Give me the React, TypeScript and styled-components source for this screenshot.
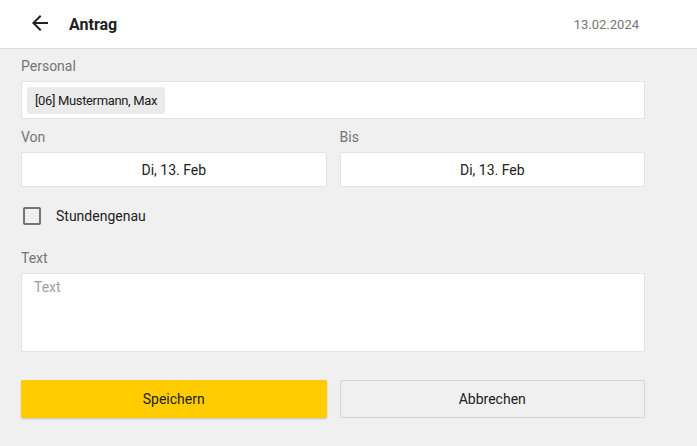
import React from "react";
import styled, { createGlobalStyle } from "styled-components";

const GlobalStyle = createGlobalStyle`
    html, body {
        margin: 0;
        padding: 0;
        background: #f0f0f0;
        font-family: Roboto, "Noto Sans", "Liberation Sans", sans-serif;
        color: #212121;
    }
    * {
        box-sizing: border-box;
    }
`;

const BackIcon: React.FC = () => (
    <svg width="24" height="24" viewBox="0 0 24 24" fill="#212121">
        <path d="M20 11H7.83l5.59-5.59L12 4l-8 8 8 8 1.41-1.41L7.83 13H20v-2z" />
    </svg>
);

const App: React.FC = () => {
    const [exact, setExact] = React.useState(false);

    return (
        <>
            <GlobalStyle />
            <Page>
                <Header>
                    <BackButton aria-label="Zurück">
                        <BackIcon />
                    </BackButton>
                    <Title>Antrag</Title>
                    <HeaderDate>13.02.2024</HeaderDate>
                </Header>

                <Form>
                    <Field>
                        <Label>Personal</Label>
                        <ChipInput>
                            <Chip>[06] Mustermann, Max</Chip>
                        </ChipInput>
                    </Field>

                    <TwoColumns $top={8}>
                        <Field>
                            <Label>Von</Label>
                            <DateBox>Di, 13. Feb</DateBox>
                        </Field>
                        <Field>
                            <Label>Bis</Label>
                            <DateBox>Di, 13. Feb</DateBox>
                        </Field>
                    </TwoColumns>

                    <CheckRow onClick={() => setExact(v => !v)}>
                        <CheckBox $checked={exact} />
                        <CheckLabel>Stundengenau</CheckLabel>
                    </CheckRow>

                    <Field $top={23}>
                        <Label>Text</Label>
                        <TextArea placeholder="Text" />
                    </Field>

                    <TwoColumns $top={28}>
                        <Button $primary>Speichern</Button>
                        <Button>Abbrechen</Button>
                    </TwoColumns>
                </Form>
            </Page>
        </>
    );
};

export default App;

const Page = styled.div`
    min-height: 446px;
    background: #f0f0f0;
`;

const Header = styled.header`
    display: flex;
    align-items: center;
    height: 49px;
    padding: 0 58px 0 28px;
    background: #ffffff;
    border-bottom: 1px solid #e0e0e0;
`;

const BackButton = styled.button`
    display: flex;
    align-items: center;
    justify-content: center;
    width: 24px;
    height: 24px;
    padding: 0;
    margin-top: -2px;
    border: none;
    background: transparent;
    cursor: pointer;
`;

const Title = styled.h1`
    margin: 0 0 0 17px;
    font-size: 16px;
    font-weight: 700;
    color: #212121;
`;

const HeaderDate = styled.span`
    margin-left: auto;
    font-size: 13px;
    color: #757575;
`;

const Form = styled.main`
    display: flex;
    flex-direction: column;
    padding: 7px 52px 0 21px;
`;

const Field = styled.div<{ $top?: number }>`
    display: flex;
    flex-direction: column;
    margin-top: ${({ $top }) => $top ?? 0}px;
`;

const Label = styled.label`
    font-size: 14px;
    line-height: 20px;
    color: #757575;
    margin-bottom: 5px;
`;

const ChipInput = styled.div`
    display: flex;
    align-items: center;
    height: 38px;
    padding: 0 5px;
    background: #ffffff;
    border: 1px solid #e3e3e3;
    border-radius: 2px;
`;

const Chip = styled.span`
    display: inline-flex;
    align-items: center;
    height: 27px;
    padding: 0 8px;
    font-size: 13px;
    letter-spacing: -0.35px;
    color: #212121;
    background: #ebebeb;
    border-radius: 3px;
`;

const TwoColumns = styled.div<{ $top: number }>`
    display: grid;
    grid-template-columns: 1fr 1fr;
    gap: 13px;
    margin-top: ${({ $top }) => $top}px;
`;

const DateBox = styled.div`
    display: flex;
    align-items: center;
    justify-content: center;
    height: 35px;
    font-size: 14px;
    color: #212121;
    background: #ffffff;
    border: 1px solid #e3e3e3;
    border-radius: 2px;
`;

const CheckRow = styled.div`
    display: flex;
    align-items: center;
    margin-top: 20px;
    padding-left: 2px;
    height: 18px;
    cursor: pointer;
`;

const CheckBox = styled.span<{ $checked: boolean }>`
    width: 18px;
    height: 18px;
    border: 2px solid #757575;
    border-radius: 2px;
    background: ${({ $checked }) => ($checked ? "#757575" : "transparent")};
`;

const CheckLabel = styled.span`
    margin-left: 15px;
    font-size: 14px;
    color: #212121;
`;

const TextArea = styled.textarea`
    height: 79px;
    padding: 5px 12px;
    font-family: inherit;
    font-size: 14px;
    line-height: 16px;
    color: #212121;
    background: #ffffff;
    border: 1px solid #e3e3e3;
    border-radius: 2px;
    resize: none;
    outline: none;

    &::placeholder {
        color: #9e9e9e;
    }
`;

const Button = styled.button<{ $primary?: boolean }>`
    height: 38px;
    font-family: inherit;
    font-size: 14px;
    color: #212121;
    border-radius: 2px;
    cursor: pointer;
    background: ${({ $primary }) => ($primary ? "#ffcc00" : "#f0f0f0")};
    border: ${({ $primary }) => ($primary ? "none" : "1px solid #d6d6d6")};
    box-shadow: ${({ $primary }) => ($primary ? "0 1px 2px rgba(0, 0, 0, 0.2)" : "none")};
`;
